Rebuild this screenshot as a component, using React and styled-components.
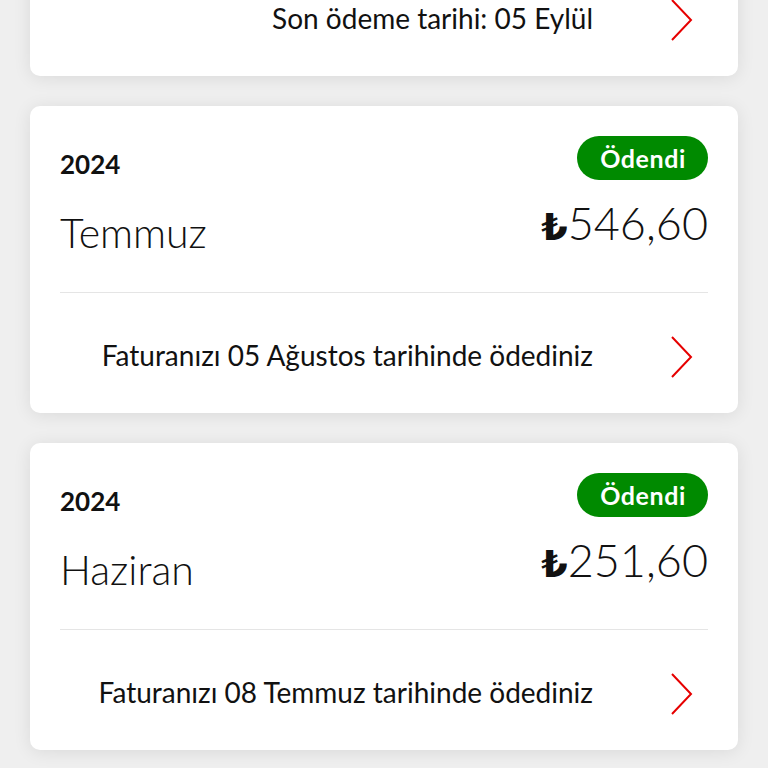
import React from 'react';
import styled, { createGlobalStyle } from 'styled-components';

const GlobalStyle = createGlobalStyle`
  html, body {
    margin: 0;
    padding: 0;
    background: #efefef;
    font-family: Lato, "Open Sans", "DejaVu Sans", sans-serif;
    color: #111;
    overflow: hidden;
  }
`;

const Page = styled.div`
  display: flex;
  flex-direction: column;
  gap: 30px;
  padding: 0 30px 40px;
  margin-top: -231px;
`;

const Card = styled.div`
  background: #fff;
  border-radius: 10px;
  box-shadow: 0 2px 18px rgba(0, 0, 0, 0.09);
  padding: 30px 30px 0;
  height: 307px;
  box-sizing: border-box;
  display: flex;
  flex-direction: column;
`;

const HeadRow = styled.div`
  display: flex;
  justify-content: space-between;
  align-items: flex-start;
  height: 44px;
`;

const Year = styled.div`
  font-size: 26px;
  font-weight: 700;
  line-height: 1;
  margin-top: 15px;
`;

const Badge = styled.div`
  height: 44px;
  padding: 0 22px 0 23px;
  border-radius: 22px;
  background: ${p => p.$color};
  color: #fff;
  font-size: 25px;
  font-weight: 700;
  letter-spacing: 0.6px;
  display: flex;
  align-items: center;
`;

const MainRow = styled.div`
  display: flex;
  justify-content: space-between;
  align-items: flex-start;
  height: 112px;
  border-bottom: 1px solid #e5e5e5;
`;

const Month = styled.div`
  font-size: 41px;
  font-weight: 300;
  line-height: 1;
  margin-top: 32px;
`;

const Amount = styled.div`
  font-size: 45px;
  font-weight: 300;
  line-height: 1;
  margin-top: 21px;
`;

const Lira = styled.span`
  font-family: "DejaVu Sans", sans-serif;
  font-weight: 700;
  font-size: 38px;
`;

const Footer = styled.div`
  flex: 1;
  display: flex;
  align-items: center;
  justify-content: flex-end;
  padding-top: 4px;
`;

const FootText = styled.div`
  font-size: 28px;
  font-weight: 400;
  margin-right: 77px;
`;

const Chevron = styled.svg`
  width: 24px;
  height: 44px;
  margin: 3px 14px 0 0;
  flex-shrink: 0;
`;

const Arrow = () => (
  <Chevron viewBox="0 0 24 44">
    <polyline points="2,2 21,22 2,42" fill="none" stroke="#e60000" strokeWidth="2" />
  </Chevron>
);

const bills = [
  { year: '2024', month: 'Ağustos', amount: '546,60', status: 'Ödenmedi', color: '#e60000', note: 'Son ödeme tarihi: 05 Eylül' },
  { year: '2024', month: 'Temmuz', amount: '546,60', status: 'Ödendi', color: '#008a00', note: 'Faturanızı 05 Ağustos tarihinde ödediniz' },
  { year: '2024', month: 'Haziran', amount: '251,60', status: 'Ödendi', color: '#008a00', note: 'Faturanızı 08 Temmuz tarihinde ödediniz' },
];

const BillCard = ({ bill }) => (
  <Card>
    <HeadRow>
      <Year>{bill.year}</Year>
      <Badge $color={bill.color}>{bill.status}</Badge>
    </HeadRow>
    <MainRow>
      <Month>{bill.month}</Month>
      <Amount><Lira>₺</Lira>{bill.amount}</Amount>
    </MainRow>
    <Footer>
      <FootText>{bill.note}</FootText>
      <Arrow />
    </Footer>
  </Card>
);

export default function App() {
  return (
    <>
      <GlobalStyle />
      <Page>
        {bills.map((b, i) => <BillCard key={i} bill={b} />)}
      </Page>
    </>
  );
}
